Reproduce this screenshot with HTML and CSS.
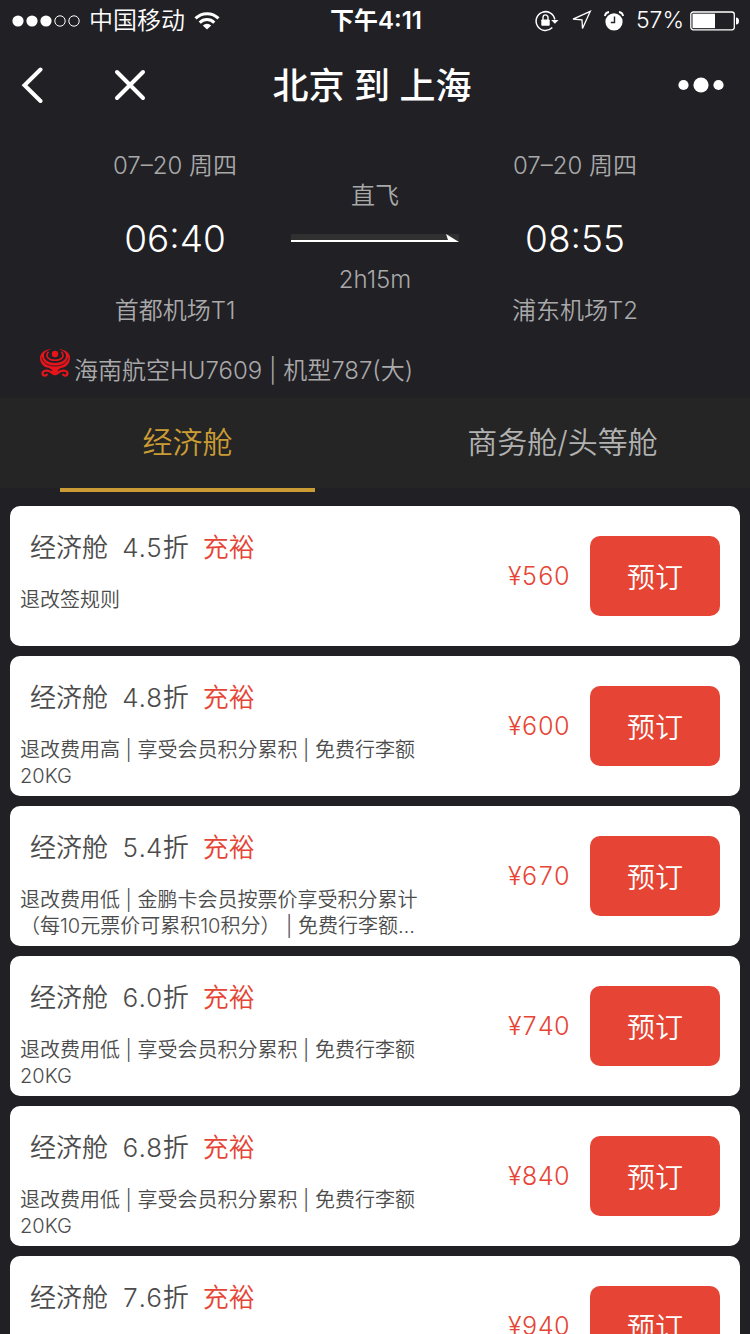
FILE: index.html
```html
<!DOCTYPE html>
<html lang="zh-CN">
<head>
<meta charset="utf-8">
<meta name="viewport" content="width=device-width, initial-scale=1">
<title>北京 到 上海</title>
<link rel="stylesheet" href="styles.css">
</head>
<body>
<div class="app">
  <div class="status">
    <div class="status-left">
      <svg width="68" height="12" viewBox="0 0 68 12"><g fill="#fff"><circle cx="6" cy="6" r="5.6"/><circle cx="20" cy="6" r="5.6"/><circle cx="34" cy="6" r="5.6"/></g><g fill="none" stroke="#fff"><circle cx="48" cy="6" r="5.2"/><circle cx="62" cy="6" r="5.2"/></g></svg>
      <span>中国移动</span>
      <svg width="26" height="19" viewBox="0 0 26 19" fill="none" stroke="#fff" stroke-width="3"><path d="M1.5 7.4a16.4 16.4 0 0 1 23 0"/><path d="M5.7 11.6a10.4 10.4 0 0 1 14.6 0"/><path d="M13 18.6l-4.2-4.2a6 6 0 0 1 8.400 0z" fill="#fff" stroke="none"/></svg>
    </div>
    <div class="status-time">下午4:11</div>
    <div class="status-right">
      <svg width="24" height="22" viewBox="0 0 24 22"><path d="M17.300 17.600A9.400 9.400 0 1 1 19.800 9.500" fill="none" stroke="#fff" stroke-width="1.500"/><path d="M16.200 10h7.300l-3.600 3.800z" fill="#fff"/><rect x="6.300" y="9.500" width="8.400" height="6.200" rx=".8" fill="#fff"/><path d="M8 10V7.600a2.500 2.700 0 0 1 5 0V10" fill="none" stroke="#fff" stroke-width="1.400"/></svg>
      <svg width="21" height="21" viewBox="0 0 21 21" fill="none" stroke="#fff" stroke-width="1.300"><path d="M19.300 1.300L11.500 18.500 11 9.800 2 9.200z"/></svg>
      <svg width="20" height="20" viewBox="0 0 20 20"><circle cx="10" cy="10.800" r="8.600" fill="#fff"/><path d="M.8 5A5 5 0 0 1 5 1M15 1a5 5 0 0 1 4.200 4" fill="none" stroke="#fff" stroke-width="1.800"/><path d="M10.500 5.500v6H6.800" fill="none" stroke="#212025" stroke-width="1.400"/></svg>
      <span class="percent">57%</span>
      <svg width="50" height="20" viewBox="0 0 50 20"><rect x=".8" y="1" width="43.500" height="17.800" rx="2.500" fill="none" stroke="#fff" stroke-width="1.300"/><rect x="2.500" y="2.700" width="22.500" height="14.400" fill="#fff"/><path d="M46 6.500a3 3.500 0 0 1 0 7z" fill="#fff"/></svg>
    </div>
  </div>

  <header class="nav">
    <div class="nav-left">
      <button class="icon-btn" aria-label="返回"><svg width="24" height="36" viewBox="0 0 24 36" fill="none" stroke="#fff" stroke-width="4" stroke-linecap="round" stroke-linejoin="miter"><path d="M20.500 2.500L4.500 18.300l16 15.700"/></svg></button>
      <button class="icon-btn" aria-label="关闭"><svg width="32" height="32" viewBox="0 0 32 32" fill="none" stroke="#fff" stroke-width="4" stroke-linecap="round"><path d="M3 3l26 26M29 3L3 29"/></svg></button>
    </div>
    <h1 class="nav-title">北京 到 上海</h1>
    <div class="nav-right">
      <button class="icon-btn" aria-label="更多"><svg width="46" height="16" viewBox="0 0 46 16" fill="#fff"><circle cx="5.500" cy="8" r="5.100"/><circle cx="23" cy="8" r="7.600"/><circle cx="40.500" cy="8" r="5.100"/></svg></button>
    </div>
  </header>

  <section class="flight">
    <div class="route">
      <div class="stop">
        <div class="label">07–20 周四</div>
        <div class="time">06:40</div>
        <div class="label">首都机场T1</div>
      </div>
      <div class="leg">
        <div class="label">直飞</div>
        <svg width="168" height="8" viewBox="0 0 168 8"><path fill="#303031" d="M0 0h168v8H0z"/><path fill="#fff" d="M0 6h157L155 0l13 8H0z"/></svg>
        <div class="label">2h15m</div>
      </div>
      <div class="stop">
        <div class="label">07–20 周四</div>
        <div class="time">08:55</div>
        <div class="label">浦东机场T2</div>
      </div>
    </div>
    <div class="airline">
      <svg width="30" height="28" viewBox="0 0 30 28" fill="none" stroke="#e8141c"><path fill="#e8141c" stroke="none" d="M12 0C4 .3 0 4.500 0 9c0 4.500 2.500 7.500 6 9.500l9 6.500 9-6.500c3.500-2 6-5 6-9.500 0-4.500-4-8.700-12-9 5.500 1.300 8 3.700 8 6.800 0 4.200-5 7.200-11 7.200S4 11 4 6.800C4 3.700 6.500 1.300 12 0z"/><path stroke="#212025" stroke-width=".9" d="M1.800 8.500C3 14 8 17 15 17s12-3 13.200-8.500"/><circle cx="15" cy="5" r="3.200" fill="#e8141c" stroke="none"/><path stroke-width="1.600" d="M8.500 2.800C4.500 8 9 11.300 15 11.300S25.500 8 21.500 2.800"/><path stroke="#212025" stroke-width="1.500" d="M1.500 19.800c4-1.500 8-.5 10.500 2.200M28.500 19.800c-4-1.500-8-.5-10.500 2.200"/><path stroke-width="2.200" d="M15 25c-2 .8-2.500-1-4-2-4-2.500-8.500-1.300-8.500 1.500 0 2.800 4.500 2.800 4.500.3M15 25c2 .8 2.500-1 4-2 4-2.500 8.500-1.300 8.500 1.500 0 2.800-4.500 2.800-4.500.3"/></svg>
      <span class="label airline-text">海南航空HU7609 | 机型787(大)</span>
    </div>
  </section>

  <div class="tabs" role="tablist">
    <button class="tab tab-active" role="tab" aria-selected="true">经济舱</button>
    <button class="tab" role="tab" aria-selected="false">商务舱/头等舱</button>
  </div>

  <main class="fares">
    <article class="fare">
      <div class="info"><h2 class="name"><span>经济舱</span><span>4.5折</span><span class="stock">充裕</span></h2><p class="rules">退改签规则</p></div>
      <span class="price">¥560</span><button class="book">预订</button>
    </article>
    <article class="fare">
      <div class="info"><h2 class="name"><span>经济舱</span><span>4.8折</span><span class="stock">充裕</span></h2><p class="rules">退改费用高 | 享受会员积分累积 | 免费行李额20KG</p></div>
      <span class="price">¥600</span><button class="book">预订</button>
    </article>
    <article class="fare">
      <div class="info"><h2 class="name"><span>经济舱</span><span>5.4折</span><span class="stock">充裕</span></h2><p class="rules">退改费用低 | 金鹏卡会员按票价享受积分累计（每10元票价可累积10积分） | 免费行李额20KG</p></div>
      <span class="price">¥670</span><button class="book">预订</button>
    </article>
    <article class="fare">
      <div class="info"><h2 class="name"><span>经济舱</span><span>6.0折</span><span class="stock">充裕</span></h2><p class="rules">退改费用低 | 享受会员积分累积 | 免费行李额20KG</p></div>
      <span class="price">¥740</span><button class="book">预订</button>
    </article>
    <article class="fare">
      <div class="info"><h2 class="name"><span>经济舱</span><span>6.8折</span><span class="stock">充裕</span></h2><p class="rules">退改费用低 | 享受会员积分累积 | 免费行李额20KG</p></div>
      <span class="price">¥840</span><button class="book">预订</button>
    </article>
    <article class="fare">
      <div class="info"><h2 class="name"><span>经济舱</span><span>7.6折</span><span class="stock">充裕</span></h2></div>
      <span class="price">¥940</span><button class="book">预订</button>
    </article>
  </main>
</div>
</body>
</html>
```

FILE: styles.css
```css
* { box-sizing: border-box; }

body {
  margin: 0;
  background: #212025;
  color: #fff;
  font-family: Inter, "Noto Sans CJK SC", sans-serif;
  font-weight: 350;
}

button {
  padding: 0;
  border: 0;
  background: none;
  color: inherit;
  font: inherit;
  cursor: pointer;
}

h1, h2, p { margin: 0; font-weight: inherit; }

svg { display: block; flex: none; }

.app {
  display: flex;
  flex-direction: column;
  height: 100vh;
  overflow: hidden;
}

/* Status bar */
.status {
  flex: none;
  display: grid;
  grid-template-columns: 1fr auto 1fr;
  align-items: center;
  height: 40px;
  padding: 1px 10px 0 12px;
  font-size: 24px;
  line-height: 39px;
}

.status-left, .status-right { display: flex; align-items: center; }
.status-left { gap: 9px; }
.status-right { justify-content: flex-end; gap: 12px; }
.status-time { font-weight: 600; }
.percent { margin-right: -6px; font-size: 23px; }

/* Navigation bar */
.nav {
  flex: none;
  display: grid;
  grid-template-columns: 1fr auto 1fr;
  align-items: center;
  height: 90px;
  padding: 0 26px 0 20px;
}

.nav-left { display: flex; align-items: center; gap: 70px; }
.nav-right { display: flex; justify-content: flex-end; }
.nav-title { padding-top: 2px; font-size: 36px; font-weight: 500; line-height: 48px; }

/* Flight summary */
.flight { flex: none; padding: 19px 0 10px; }

.route {
  display: grid;
  grid-template-columns: repeat(3, 1fr);
  padding: 0 10%;
  text-align: center;
}

.label { color: #a9a9aa; font-size: 24px; line-height: 34px; }

.time {
  padding: 28px 0;
  font-size: 37px;
  line-height: 55px;
}

.leg {
  display: flex;
  flex-direction: column;
  align-items: center;
  gap: 21px;
  padding-top: 30px;
}

.airline { display: flex; gap: 4px; padding: 21px 40px 0; }
.airline-text { padding-top: 5px; }

/* Cabin tabs */
.tabs {
  flex: none;
  display: grid;
  grid-template-columns: 1fr 1fr;
  height: 90px;
  background: #252525;
}

.tab { position: relative; padding-bottom: 6px; color: #b2b2b2; font-size: 30px; }
.tab-active { color: #cb9c34; }

.tab-active::after {
  content: "";
  position: absolute;
  top: 100%;
  left: 60px;
  right: 60px;
  height: 4px;
  background: #cb9c34;
}

/* Fare list */
.fares {
  display: flex;
  flex-direction: column;
  gap: 10px;
  padding: 18px 10px 0;
}

.fare {
  flex: none;
  display: flex;
  align-items: center;
  min-height: 140px;
  padding: 0 20px 0 10px;
  border-radius: 10px;
  background: #fff;
}

.info { align-self: flex-start; width: 400px; padding: 22px 0 6px; }

.name {
  display: flex;
  gap: 14px;
  padding-left: 10px;
  color: #4c4c4c;
  font-size: 26px;
  line-height: 40px;
}

.name, .price { font-variant-numeric: tabular-nums; }

.stock, .price { color: #e64434; }

.rules {
  display: -webkit-box;
  margin-top: 19px;
  overflow: hidden;
  color: #4c4c4c;
  font-size: 20px;
  line-height: 26px;
  -webkit-box-orient: vertical;
  -webkit-line-clamp: 2;
}

.price { margin-left: auto; font-size: 25px; line-height: 40px; }

.book {
  width: 130px;
  height: 80px;
  margin-left: 20px;
  border-radius: 10px;
  background: #e64434;
  color: #fff;
  font-size: 28px;
}
```
